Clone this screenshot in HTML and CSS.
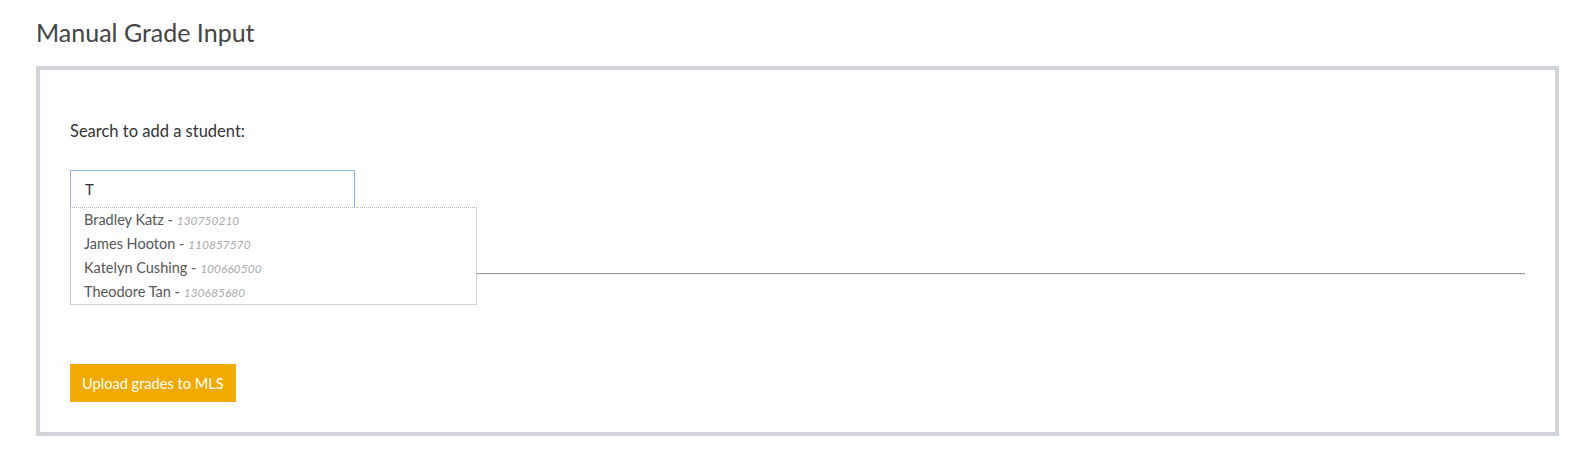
FILE: index.html
```html
<!DOCTYPE html>
<html lang="en">
<head>
<meta charset="utf-8">
<title>Manual Grade Input</title>
<link rel="stylesheet" href="styles.css">
</head>
<body>
<div class="page">
  <h1 class="title">Manual Grade Input</h1>
  <div class="panel">
    <label class="search-label" for="student-search">Search to add a student:</label>
    <div class="search">
      <input id="student-search" class="search-input" type="text" value="T">
      <ul class="suggestions">
        <li class="suggestion"><span class="name">Bradley Katz - </span><span class="sid">130750210</span></li>
        <li class="suggestion"><span class="name">James Hooton - </span><span class="sid">110857570</span></li>
        <li class="suggestion"><span class="name">Katelyn Cushing - </span><span class="sid">100660500</span></li>
        <li class="suggestion"><span class="name">Theodore Tan - </span><span class="sid">130685680</span></li>
      </ul>
    </div>
    <hr class="divider">
    <button class="upload" type="button">Upload grades to MLS</button>
  </div>
</div>
</body>
</html>
```
FILE: styles.css
```css
* { box-sizing: border-box; }
html, body { margin: 0; padding: 0; background: #fff; }
body {
  font-family: "Lato", "Open Sans", "Liberation Sans", sans-serif;
  color: #444;
  width: 1594px;
}
.page {
  padding: 0 35px 0 36px;
}
.title {
  margin: 17px 0 19px;
  font-size: 25px;
  line-height: 30px;
  font-weight: 400;
  color: #444;
}
.panel {
  border: 4px solid #d1d4d8;
  padding: 30px;
  display: flex;
  flex-direction: column;
  align-items: flex-start;
}
.search-label {
  display: block;
  margin-top: 21px;
  font-size: 16.5px;
  line-height: 20px;
  color: #333;
}
.search {
  position: relative;
  margin-top: 29px;
}
.search-input {
  display: block;
  width: 285px;
  height: 38px;
  margin: 0;
  padding: 0 14px;
  border: 1px solid #8fb2ef;
  outline: none;
  font-family: inherit;
  font-size: 15px;
  color: #333;
  background: #fff;
}
.suggestions {
  position: absolute;
  top: 37px;
  left: 0;
  width: 407px;
  margin: 0;
  padding: 0;
  list-style: none;
  background: #fff;
  border: 1px solid #cfcfcf;
  border-top: 1px dotted #b5b5b5;
  z-index: 2;
}
.suggestion {
  height: 24px;
  line-height: 24px;
  padding-left: 13px;
  font-size: 14.5px;
  white-space: nowrap;
}
.name { color: #555; }
.sid { color: #aaa; font-style: italic; font-size: 12px; }
.divider {
  align-self: stretch;
  margin: 65px 0 0;
  border: 0;
  border-top: 1px solid #999;
  border-bottom: 1px solid #eee;
  height: 0;
}
.upload {
  margin-top: 89px;
  height: 38px;
  padding: 0 12px;
  border: 0;
  background: #f2a900;
  color: #fff;
  font-family: inherit;
  font-size: 14.6px;
}
```
